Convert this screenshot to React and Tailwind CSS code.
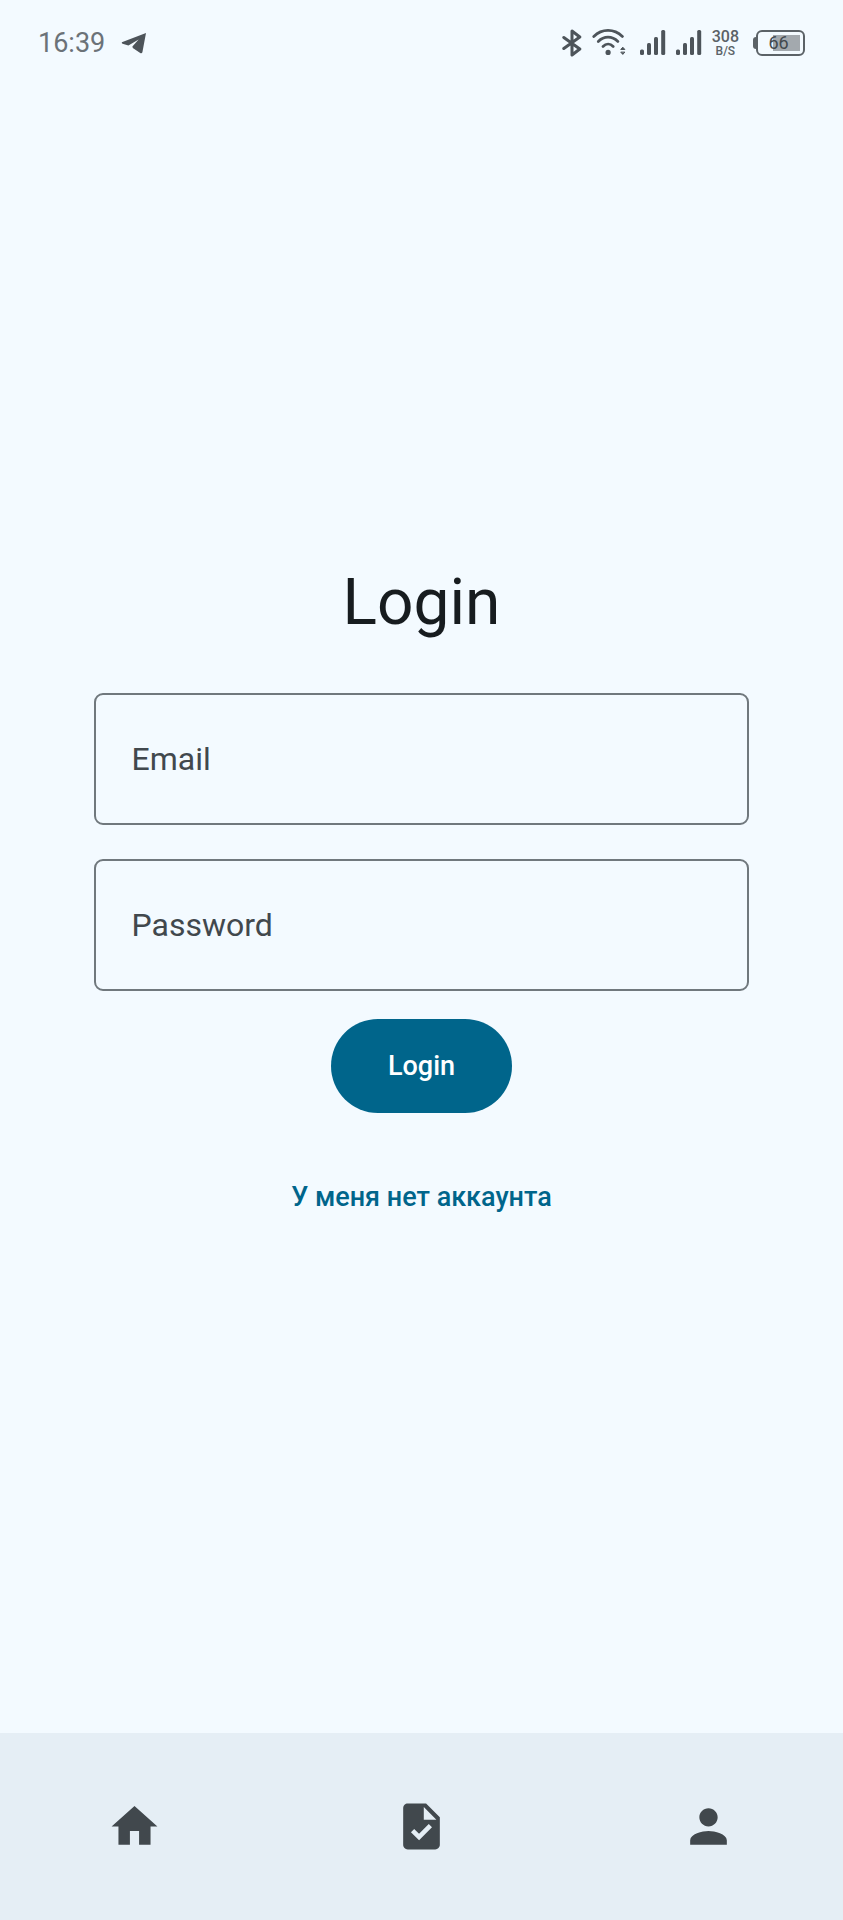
import { MdHome, MdTask, MdPerson } from "react-icons/md";

function TelegramIcon() {
  return (
    <svg className="h-[22px] w-[26px]" viewBox="0 0 26 22" fill="#4d545a" aria-hidden="true">
      <path d="M25 1 L0.8 10.2 Q0.6 11.4 1.6 11.8 L7.4 13.4 L17.6 7.4 L11.4 14.6 L11.8 16 L19.6 21.2 Q21 21.6 21.4 20.2 Z" />
    </svg>
  );
}

function BluetoothIcon() {
  return (
    <svg className="h-7 w-5" viewBox="0 0 20 28" fill="none" stroke="#4d545a" strokeWidth="3" strokeLinejoin="round" strokeLinecap="round" aria-hidden="true">
      <path d="M1.8 8.5 L17.8 20 L10 26 V2 L17.8 8 L1.8 19.5" />
    </svg>
  );
}

function WifiIcon() {
  return (
    <svg className="h-7 w-[34px]" viewBox="0 0 34 28" fill="none" stroke="#4d545a" strokeWidth="2.8" strokeLinecap="round" aria-hidden="true">
      <path d="M1.8 7.4 C10 -0.6 22 -0.6 30.4 7.4" />
      <path d="M6.3 12.4 C12 6.8 20 6.8 25.9 12.4" />
      <path d="M11 17.4 C14 14.4 18.2 14.4 21.2 17.4" />
      <circle cx="16.1" cy="23.4" r="2.6" fill="#4d545a" stroke="none" />
      <path d="M29 20.2 L30.8 18.2 L32.6 20.2 Z M29 23.4 L30.8 25.4 L32.6 23.4 Z" fill="#4d545a" strokeWidth="1" />
    </svg>
  );
}

function SignalIcon() {
  return (
    <svg className="h-7 w-[26px]" viewBox="0 0 26 28" fill="#4d545a" aria-hidden="true">
      <rect x="0" y="20.5" width="4" height="5.5" rx="1.5" />
      <rect x="7" y="14" width="4" height="12" rx="1.5" />
      <rect x="14" y="8" width="4" height="18" rx="1.5" />
      <rect x="21.2" y="1" width="4" height="25" rx="1.5" />
    </svg>
  );
}

function Battery() {
  return (
    <div className="flex items-center">
      <div className="h-3 w-[3px] rounded-l-sm bg-[#5b6267]" />
      <div className="relative flex h-[26px] w-[49px] items-center justify-center rounded-md border-2 border-[#5b6267]">
        <div className="absolute inset-y-[3px] right-[3px] w-[27px] bg-[#a3a9ae]" />
        <span className="relative pr-1 text-lg leading-none text-[#42494e]">66</span>
      </div>
    </div>
  );
}

function StatusBar() {
  return (
    <header className="flex h-[75px] items-center justify-between pt-[11px] pr-[38px] pl-[38px]">
      <div className="flex items-center gap-4">
        <time className="text-[27px] leading-8 text-[#6b7278]">16:39</time>
        <TelegramIcon />
      </div>
      <div className="flex items-center gap-[10px]">
        <BluetoothIcon />
        <WifiIcon />
        <div className="flex gap-[10px] pl-1">
          <SignalIcon />
          <SignalIcon />
        </div>
        <div className="flex flex-col items-center pr-1 text-[#5b6267]">
          <span className="text-base leading-4 font-medium">308</span>
          <span className="text-xs leading-3 font-medium">B/S</span>
        </div>
        <Battery />
      </div>
    </header>
  );
}

function Field({ id, type, label }) {
  return (
    <input
      id={id}
      type={type}
      aria-label={label}
      placeholder={label}
      className="h-[132px] w-full rounded-[9px] border-2 border-[#70787d] bg-transparent px-9 text-[32px] text-[#171c1f] placeholder:text-[#41484d] placeholder:opacity-100"
    />
  );
}

function NavItem({ label, icon: Icon }) {
  return (
    <a href="#" aria-label={label} className="flex flex-1 items-center justify-center text-[#41484d]">
      <Icon className="size-[55px]" />
    </a>
  );
}

export default function App() {
  return (
    <div className="flex min-h-screen flex-col bg-[#f3faff] font-['Roboto',sans-serif]">
      <StatusBar />
      <main className="flex flex-1 flex-col justify-center px-[11.1%]">
        <form className="flex flex-col items-center" onSubmit={(e) => e.preventDefault()}>
          <h1 className="mb-[52px] text-[64px] leading-[76px] text-[#171c1f]">Login</h1>
          <div className="flex w-full flex-col gap-[34px]">
            <Field id="email" type="email" label="Email" />
            <Field id="password" type="password" label="Password" />
          </div>
          <button type="submit" className="mt-7 h-[94px] rounded-full bg-[#00658b] px-[57px] text-[27px] font-medium text-white">
            Login
          </button>
          <button type="button" className="mt-[38px] h-[92px] px-7 text-[27px] font-medium text-[#00658b]">
            У меня нет аккаунта
          </button>
        </form>
      </main>
      <nav className="flex h-[187px] gap-[18px] bg-[#e5eef5]">
        <NavItem label="Home" icon={MdHome} />
        <NavItem label="Tasks" icon={MdTask} />
        <NavItem label="Profile" icon={MdPerson} />
      </nav>
    </div>
  );
}
